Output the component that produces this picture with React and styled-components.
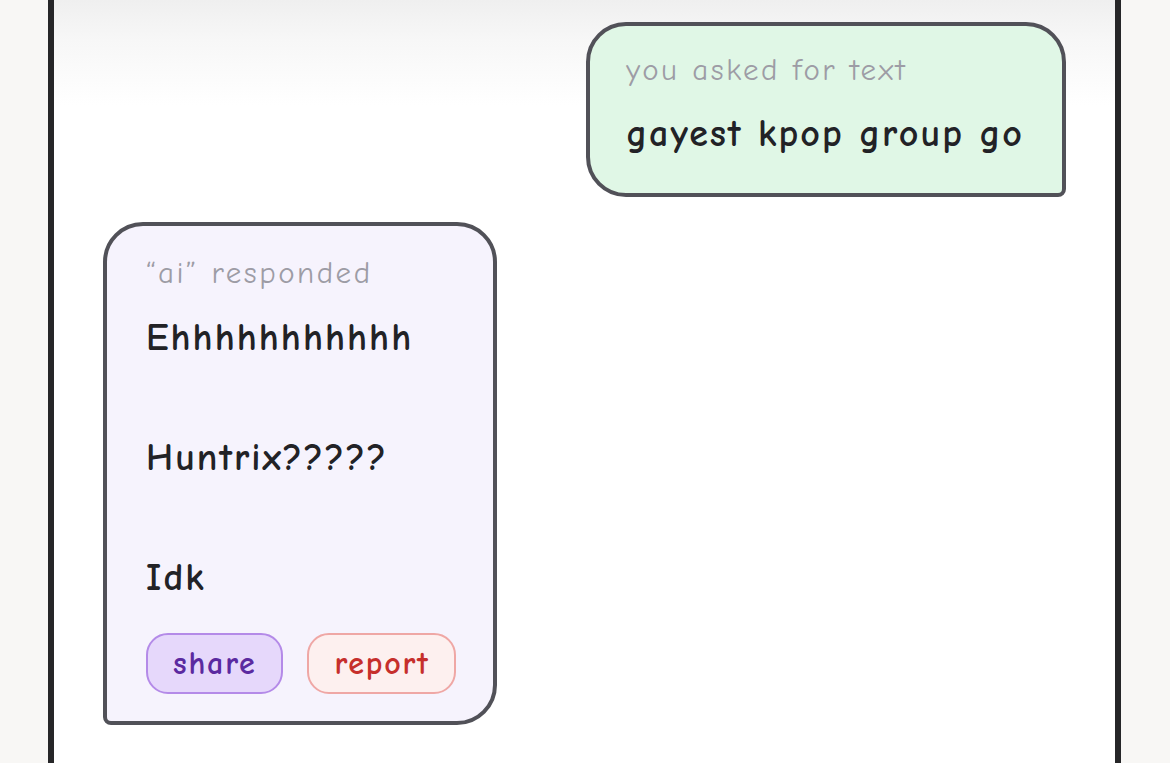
import React from 'react';
import styled, { createGlobalStyle } from 'styled-components';

const GlobalStyle = createGlobalStyle`
  html, body {
    margin: 0;
    padding: 0;
    background: #f8f7f5;
    font-family: "Comic Sans MS", "Comic Neue", "DejaVu Sans", sans-serif;
  }
  #root {
    height: 763px;
    overflow: hidden;
  }
`;

const Page = styled.div`
  height: 763px;
  padding: 0 49px 0 48px;
  box-sizing: border-box;
`;

const Frame = styled.div`
  height: 100%;
  box-sizing: border-box;
  border-left: 6px solid #262628;
  border-right: 6px solid #262628;
  background: linear-gradient(#efefef 0, #f7f7f7 40px, #ffffff 105px);
  padding: 22px 49px 0 49px;
  display: flex;
  flex-direction: column;
  gap: 25px;
`;

const Bubble = styled.div`
  align-self: ${(p) => (p.$mine ? 'flex-end' : 'flex-start')};
  background: ${(p) => (p.$mine ? '#e0f7e6' : '#f6f3fd')};
  border: 4px solid #515158;
  border-radius: ${(p) => (p.$mine ? '40px 40px 8px 40px' : '40px 40px 40px 8px')};
  padding: ${(p) => (p.$mine ? '24px 38px 35px 36px' : '27px 37px 27px 39px')};
  display: flex;
  flex-direction: column;
  gap: ${(p) => (p.$mine ? '20px' : '15px')};
`;

const Label = styled.div`
  font-size: 31px;
  line-height: 40px;
  letter-spacing: 2.5px;
  color: #9d9ca5;
`;

const Body = styled.div`
  font-size: 38px;
  font-weight: 700;
  letter-spacing: 2px;
  line-height: ${(p) => (p.$tall ? '60px' : '48px')};
  color: #222226;
  white-space: pre-line;
`;

const Actions = styled.div`
  display: flex;
  gap: 24px;
  margin-top: 10px;
`;

const Pill = styled.button`
  height: 61px;
  padding: 0 25px;
  border-radius: 22px;
  font-family: inherit;
  font-size: 32px;
  font-weight: 700;
  letter-spacing: 1.8px;
  border: 2.5px solid ${(p) => (p.$danger ? '#efa7a5' : '#b48ae8')};
  background: ${(p) => (p.$danger ? '#fdf0ef' : '#e6d8fb')};
  color: ${(p) => (p.$danger ? '#c62f2c' : '#5b2aa0')};
  cursor: pointer;
`;

export default function App() {
  return (
    <>
      <GlobalStyle />
      <Page>
        <Frame>
          <Bubble $mine>
            <Label>you asked for text</Label>
            <Body>gayest kpop group go</Body>
          </Bubble>
          <Bubble>
            <Label>“ai” responded</Label>
            <Body $tall>{'Ehhhhhhhhhhh\n\nHuntrix?????\n\nIdk'}</Body>
            <Actions>
              <Pill>share</Pill>
              <Pill $danger>report</Pill>
            </Actions>
          </Bubble>
        </Frame>
      </Page>
    </>
  );
}
